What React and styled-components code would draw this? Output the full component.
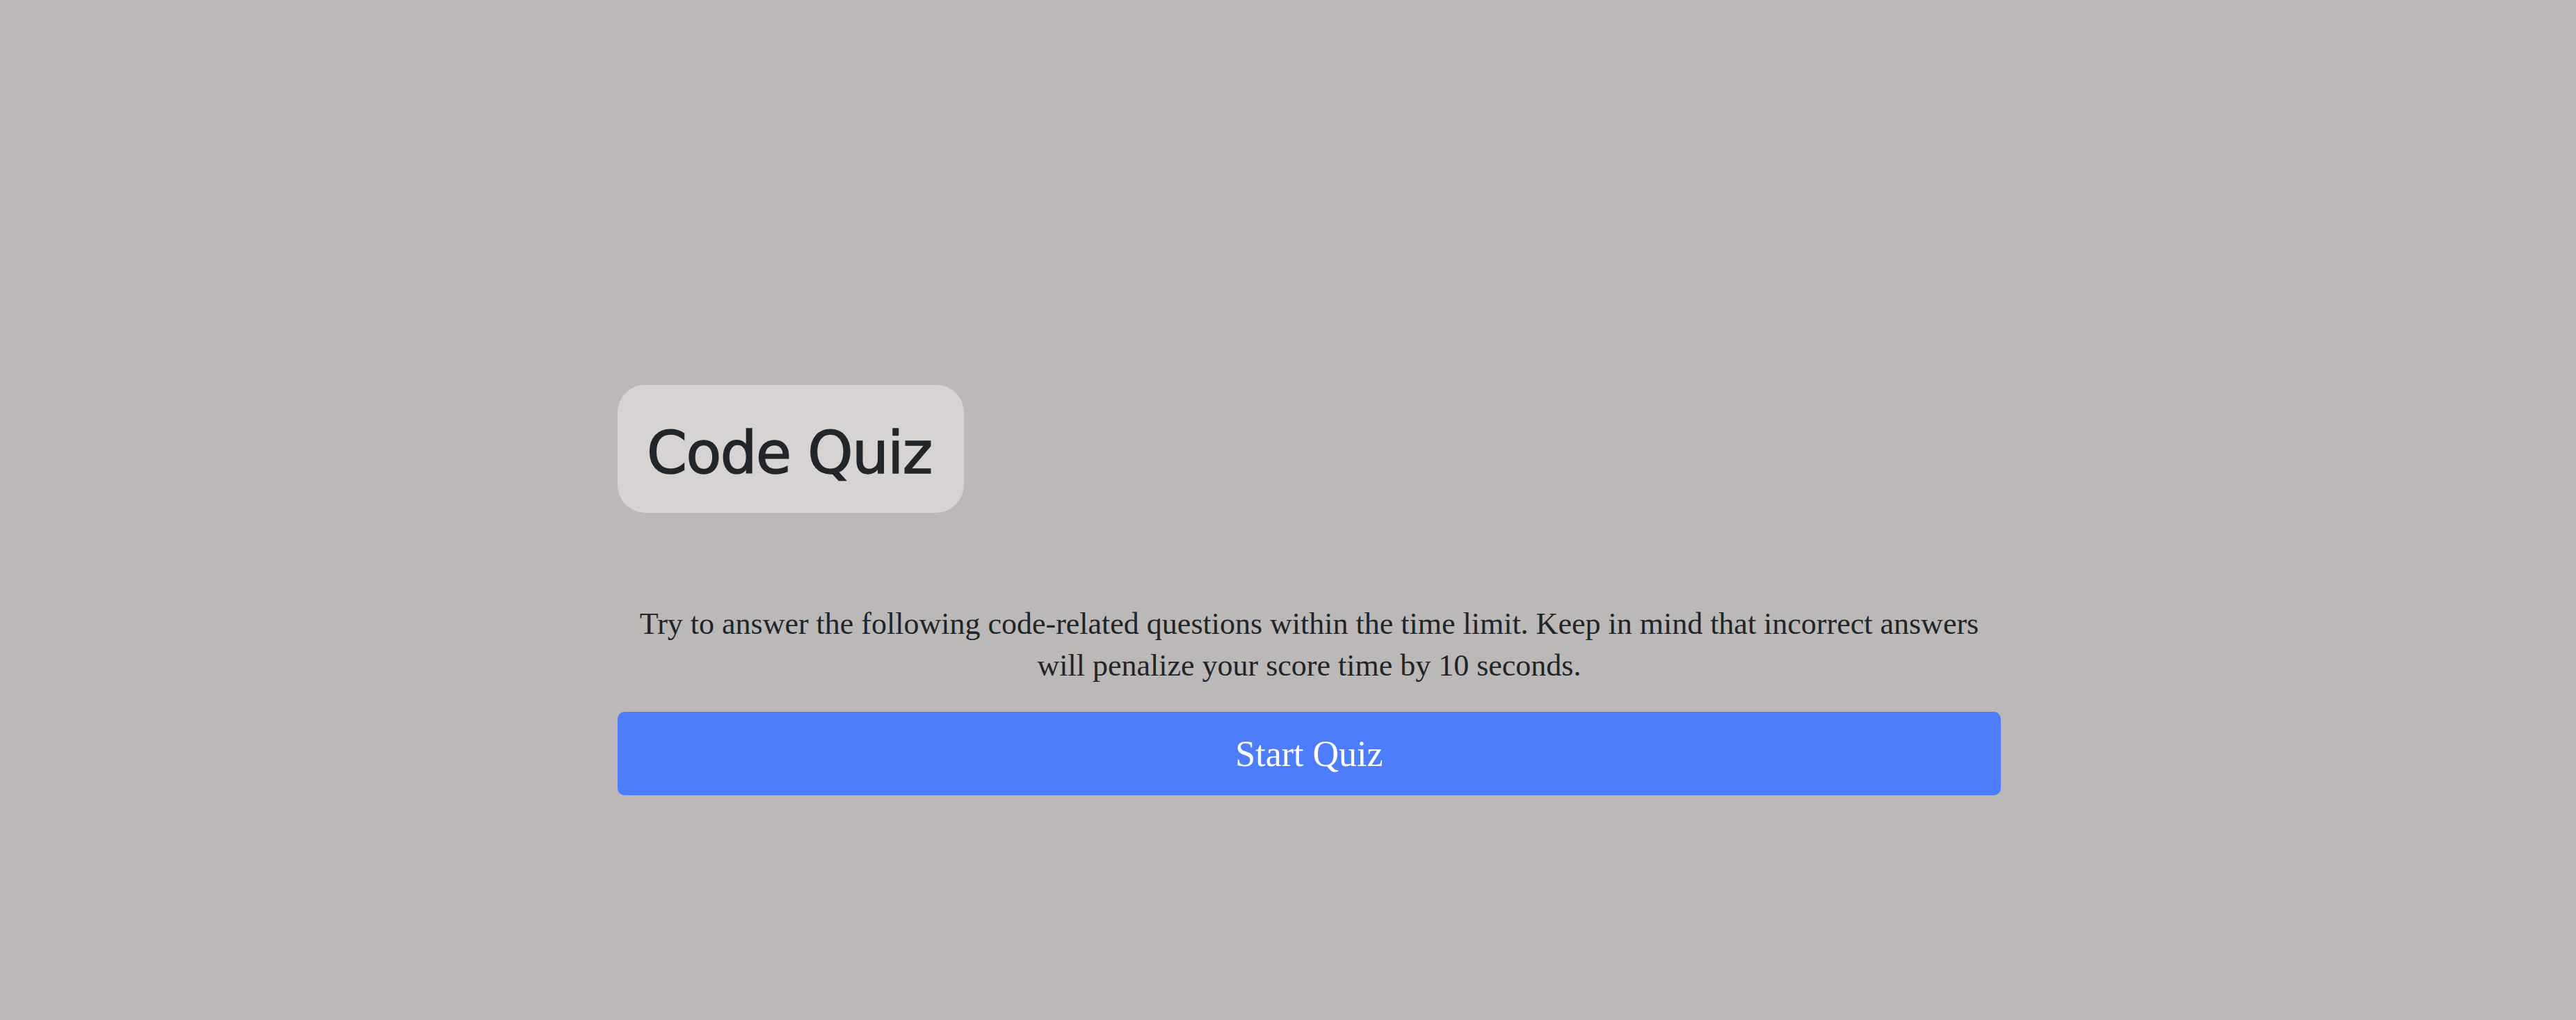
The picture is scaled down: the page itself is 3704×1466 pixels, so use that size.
import React from "react";
import styled, { createGlobalStyle } from "styled-components";

const Global = createGlobalStyle`
  html, body {
    margin: 0;
    padding: 0;
    background: #bbb8b7;
  }
  body {
    min-height: 1466px;
    font-family: "Liberation Serif", Georgia, serif;
    color: #212529;
  }
`;

const Page = styled.main`
  display: flex;
  justify-content: center;
  padding: 553px 0 0 61px;
`;

const Container = styled.section`
  width: 1989px;
  display: flex;
  flex-direction: column;
  align-items: stretch;
`;

const TitleBox = styled.header`
  align-self: flex-start;
  box-sizing: border-box;
  width: 498px;
  height: 184px;
  padding: 12px 0 0 42px;
  display: flex;
  align-items: center;
  background: #d6d3d2;
  border-radius: 40px;
`;

const Title = styled.h1`
  margin: 0;
  font-family: "Comic Sans MS", "DejaVu Sans", sans-serif;
  font-weight: 400;
  font-size: 83px;
  letter-spacing: -1.5px;
  color: #222529;
  -webkit-text-stroke: 1.5px #222529;
`;

const Intro = styled.p`
  margin: 130px 0 0;
  padding: 0 30px;
  text-align: center;
  font-size: 44px;
  line-height: 60px;
  color: #212529;
`;

const StartButton = styled.button`
  margin-top: 36px;
  height: 120px;
  border: none;
  border-radius: 10px;
  background: #4d7cfd;
  color: #ffffff;
  font-family: "Liberation Serif", Georgia, serif;
  font-size: 52px;
  cursor: pointer;
`;

export default function App() {
  return (
    <>
      <Global />
      <Page>
        <Container>
          <TitleBox>
            <Title>Code Quiz</Title>
          </TitleBox>
          <Intro>
            Try to answer the following code-related questions within the time
            limit. Keep in mind that incorrect answers will penalize your score
            time by 10 seconds.
          </Intro>
          <StartButton>Start Quiz</StartButton>
        </Container>
      </Page>
    </>
  );
}
